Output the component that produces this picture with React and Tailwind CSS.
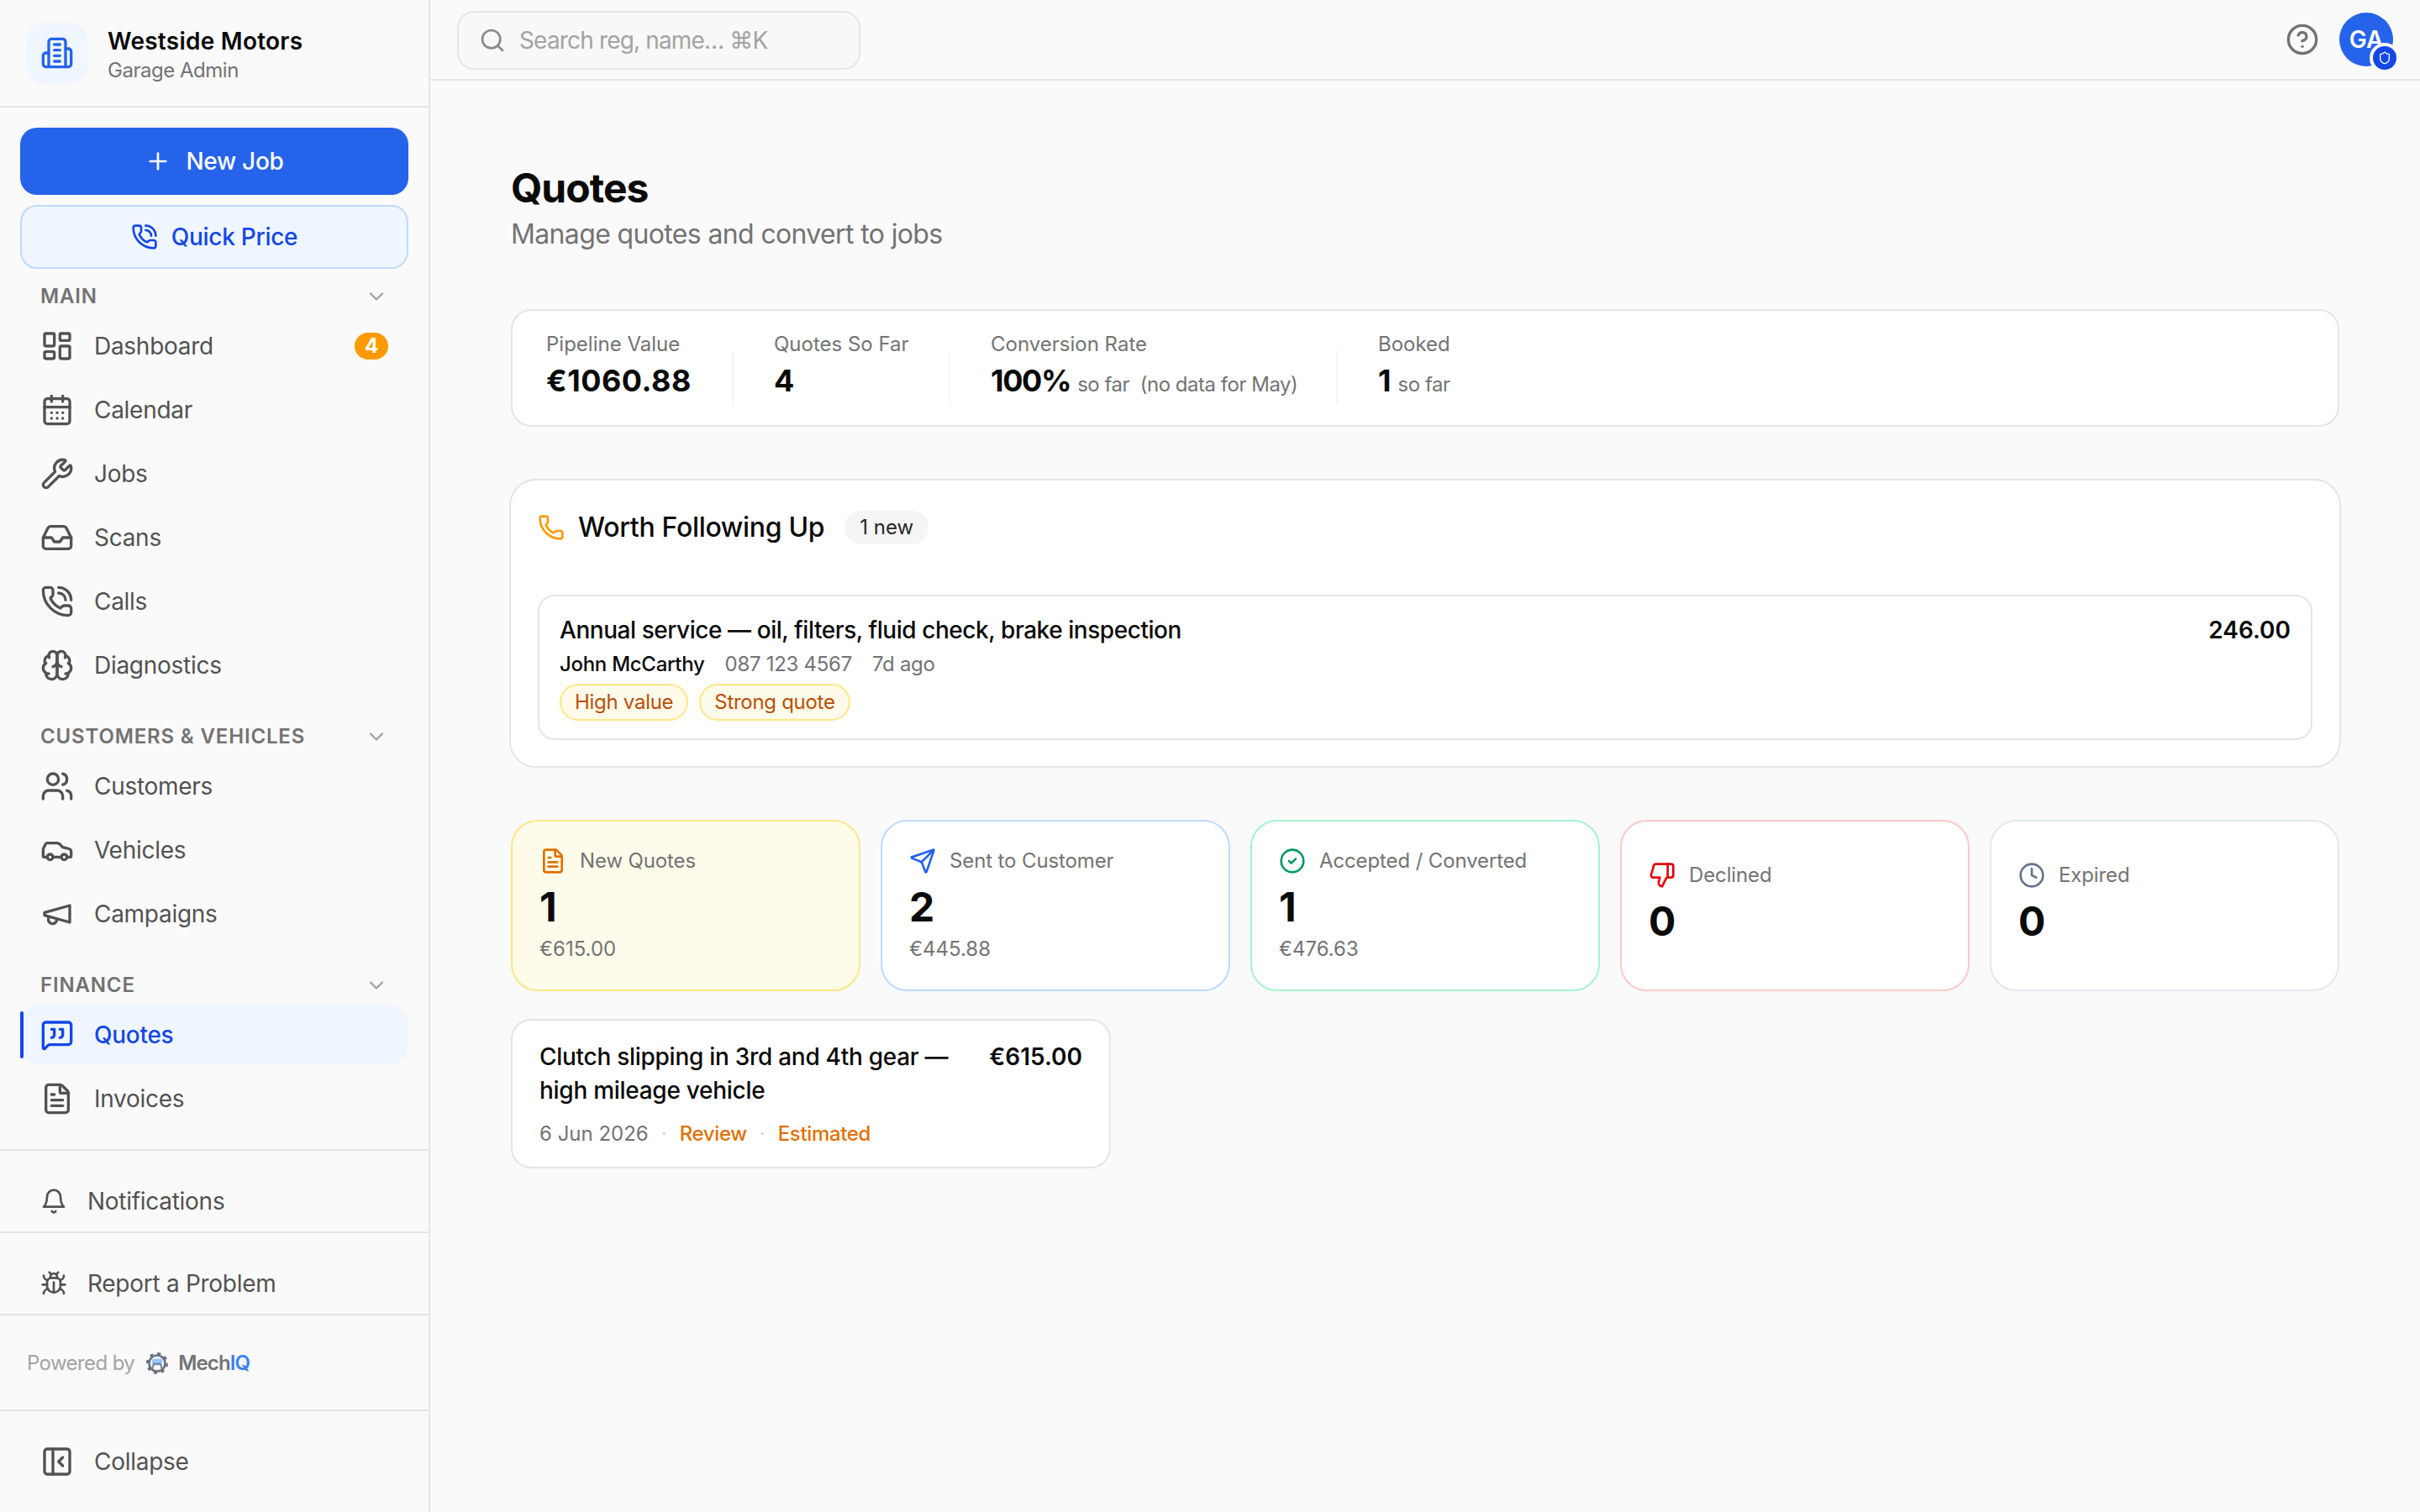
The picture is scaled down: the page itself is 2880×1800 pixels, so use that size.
import React from "react";
import {
  Plus, PhoneCall, ChevronDown, LayoutDashboard, CalendarDays, Wrench, Inbox,
  Users, Car, MessageSquareQuote, FileText, Bug, PanelLeftClose, Search, CircleHelp,
  Shield, Phone, Send, CircleCheck, Clock,
} from "lucide-react";

function Ico({ size = 40, className = "", children }) {
  return (
    <svg width={size} height={size} viewBox="0 0 24 24" fill="none" stroke="currentColor" strokeWidth="2" strokeLinecap="round" strokeLinejoin="round" className={className}>
      {children}
    </svg>
  );
}

const Building = (p) => (
  <Ico {...p}>
    <path d="M6 22V4a2 2 0 0 1 2-2h8a2 2 0 0 1 2 2v18Z" />
    <path d="M6 12H4a2 2 0 0 0-2 2v6a2 2 0 0 0 2 2h2" />
    <path d="M18 9h2a2 2 0 0 1 2 2v9a2 2 0 0 1-2 2h-2" />
    <path d="M10 6h4" /><path d="M10 10h4" /><path d="M10 14h4" /><path d="M10 18h4" />
  </Ico>
);
const BrainIcon = (p) => (
  <Ico {...p}>
    <path d="M12 5a3 3 0 1 0-5.997.125 4 4 0 0 0-2.526 5.77 4 4 0 0 0 .556 6.588A4 4 0 1 0 12 18Z" />
    <path d="M12 5a3 3 0 1 1 5.997.125 4 4 0 0 1 2.526 5.77 4 4 0 0 1-.556 6.588A4 4 0 1 1 12 18Z" />
    <path d="M15 13a4.5 4.5 0 0 1-3-4 4.5 4.5 0 0 1-3 4" />
    <path d="M17.599 6.5a3 3 0 0 0 .399-1.375" />
    <path d="M6.003 5.125A3 3 0 0 0 6.401 6.5" />
    <path d="M3.477 10.896a4 4 0 0 1 .585-.396" />
    <path d="M19.938 10.5a4 4 0 0 1 .585.396" />
    <path d="M6 18a4 4 0 0 1-1.967-.516" />
    <path d="M19.967 17.484A4 4 0 0 1 18 18" />
  </Ico>
);
const Horn = (p) => (
  <Ico {...p}>
    <path d="m3 11 18-5v12L3 13v-2z" />
    <path d="M11.6 16.8a3 3 0 1 1-5.8-1.6" />
  </Ico>
);
const BellIcon = (p) => (
  <Ico {...p}>
    <path d="M6 8a6 6 0 0 1 12 0c0 7 3 9 3 9H3s3-2 3-9" />
    <path d="M10.3 21a1.94 1.94 0 0 0 3.4 0" />
  </Ico>
);
const ThumbDown = (p) => (
  <Ico {...p}>
    <path d="M17 14V2" />
    <path d="M9 18.12 10 14H4.17a2 2 0 0 1-1.92-2.56l2.33-8A2 2 0 0 1 6.5 2H20a2 2 0 0 1 2 2v8a2 2 0 0 1-2 2h-2.76a2 2 0 0 0-1.79 1.11L12 22a3.13 3.13 0 0 1-3-3.88Z" />
  </Ico>
);

function SectionHead({ label, first }) {
  return (
    <div className={`mb-[7px] flex h-[32px] items-center justify-between px-6 ${first ? "mt-[17px]" : "mt-[33px]"}`}>
      <span className="text-[24px] font-semibold leading-[32px] tracking-[0.035em] text-[#737373]">{label}</span>
      <ChevronDown size={28} strokeWidth={2} className="text-[#a3a3a3]" />
    </div>
  );
}

function NavItem({ icon: Icon, label, active, badge }) {
  return (
    <div className={`relative flex h-[72px] items-center gap-6 rounded-[24px] px-6 ${active ? "bg-blue-50 font-medium text-blue-700" : "text-[#525252]"}`}>
      {active && <span className="absolute left-0 top-[8px] h-[56px] w-[4px] rounded-full bg-blue-700" />}
      <Icon size={40} strokeWidth={2} className="shrink-0" />
      <span className="text-[28px] leading-[40px] tracking-[-0.01em]">{label}</span>
      {badge && (
        <span className="ml-auto flex h-[32px] w-[40px] items-center justify-center rounded-full bg-amber-500 text-[24px] font-bold text-white">
          {badge}
        </span>
      )}
    </div>
  );
}

function FooterRow({ icon: Icon, label }) {
  return (
    <div className="flex h-[98px] items-center gap-6 border-t-2 border-[#e5e5e5] px-12 pt-[23px] text-[#525252]">
      <Icon size={32} className="shrink-0" />
      <span className="text-[28px] leading-[40px] tracking-[-0.01em]">{label}</span>
    </div>
  );
}

function MechLogo() {
  return (
    <svg width="26" height="26" viewBox="0 0 26 26" fill="none" className="ml-[14px] mr-[12px] shrink-0">
      <circle cx="13" cy="13" r="9.5" stroke="#6b7280" strokeWidth="2.6" />
      <circle cx="13" cy="13" r="11.5" stroke="#6b7280" strokeWidth="3" strokeDasharray="4 5" />
      <rect x="7" y="7.5" width="12" height="8" rx="2" fill="#93c5fd" />
      <path d="M8 19v-3l1.5-2.5h7L18 16v3" stroke="#6b7280" strokeWidth="1.6" />
    </svg>
  );
}

function Sidebar() {
  return (
    <aside className="flex h-[1800px] w-[512px] shrink-0 flex-col border-r-2 border-[#e5e5e5] bg-[#fafafa]">
      <div className="flex h-[128px] shrink-0 items-center gap-[24px] border-b-2 border-[#e5e5e5] pl-[32px]">
        <div className="flex h-[72px] w-[72px] items-center justify-center rounded-[20px] bg-blue-50">
          <Building size={40} className="text-[#2563eb]" />
        </div>
        <div className="mt-[5px] flex flex-col">
          <span className="text-[28px] font-semibold leading-[36px] tracking-[0.009em] text-[#0a0a0a]">Westside Motors</span>
          <span className="mt-[1px] text-[24px] leading-[32px] tracking-[-0.02em] text-[#737373]">Garage Admin</span>
        </div>
      </div>
      <div className="flex flex-1 flex-col px-[24px] pt-[24px]">
        <button className="flex h-[80px] items-center justify-center gap-[17px] rounded-[20px] bg-[#2563eb] text-[28px] font-medium tracking-[-0.01em] text-white">
          <Plus size={32} strokeWidth={2} />
          New Job
        </button>
        <button className="mt-[12px] flex h-[76px] items-center justify-center gap-[16px] rounded-[20px] border-2 border-blue-200 bg-blue-50 text-[28px] font-medium tracking-[-0.01em] text-blue-700">
          <PhoneCall size={32} strokeWidth={2} />
          Quick Price
        </button>
        <SectionHead label="MAIN" first />
        <div className="flex flex-col gap-[4px]">
          <NavItem icon={LayoutDashboard} label="Dashboard" badge="4" />
          <NavItem icon={CalendarDays} label="Calendar" />
          <NavItem icon={Wrench} label="Jobs" />
          <NavItem icon={Inbox} label="Scans" />
          <NavItem icon={PhoneCall} label="Calls" />
          <NavItem icon={BrainIcon} label="Diagnostics" />
        </div>
        <SectionHead label="CUSTOMERS & VEHICLES" />
        <div className="flex flex-col gap-[4px]">
          <NavItem icon={Users} label="Customers" />
          <NavItem icon={Car} label="Vehicles" />
          <NavItem icon={Horn} label="Campaigns" />
        </div>
        <SectionHead label="FINANCE" />
        <div className="flex flex-col gap-[4px]">
          <NavItem icon={MessageSquareQuote} label="Quotes" active />
          <NavItem icon={FileText} label="Invoices" />
        </div>
      </div>
      <FooterRow icon={BellIcon} label="Notifications" />
      <FooterRow icon={Bug} label="Report a Problem" />
      <div className="flex h-[114px] items-center border-t-2 border-[#e5e5e5] pl-[32px] pt-[2px] text-[24px]">
        <span className="tracking-[-0.025em] text-[#a3a3a3]">Powered by</span>
        <MechLogo />
        <span className="font-semibold tracking-[-0.035em] text-[#737373]">
          Mech<span className="text-[#3b82f6]">IQ</span>
        </span>
      </div>
      <div className="flex h-[122px] items-center gap-6 border-t-2 border-[#e5e5e5] px-12 text-[#525252]">
        <PanelLeftClose size={40} strokeWidth={2} className="shrink-0" />
        <span className="text-[28px] leading-[40px] tracking-[-0.01em]">Collapse</span>
      </div>
    </aside>
  );
}

function TopBar() {
  return (
    <header className="flex h-[96px] shrink-0 items-center justify-between border-b-2 border-[#e5e5e5] px-[32px]">
      <div className="mt-[2px] flex h-[70px] w-[480px] items-center gap-[16px] rounded-[20px] border-2 border-[#e5e5e5] bg-[#f8f8f8] pl-[24px]">
        <Search size={32} strokeWidth={2} className="text-[#8a8a8a]" />
        <span className="text-[28px] tracking-[-0.03em] text-[#a3a3a3]">Search reg, name… ⌘K</span>
      </div>
      <div className="flex items-center gap-[24px]">
        <CircleHelp size={40} strokeWidth={2} className="text-[#737373]" />
        <div className="relative flex h-[64px] w-[64px] items-center justify-center rounded-full bg-[#2563eb] text-[28px] font-semibold text-white">
          GA
          <span className="absolute -bottom-[8px] -right-[8px] flex h-[36px] w-[36px] items-center justify-center rounded-full border-[4px] border-[#fafafa] bg-blue-700">
            <Shield size={16} strokeWidth={2} className="text-white" />
          </span>
        </div>
      </div>
    </header>
  );
}

function Stat({ label, value, note, width, valueClass }) {
  return (
    <div className={`whitespace-nowrap ${width}`}>
      <div className="text-[24px] leading-[32px] text-[#737373]">{label}</div>
      <div className="mt-[3px] flex items-baseline gap-[8px] leading-[48px]">
        <span className={`text-[36px] font-bold text-[#0a0a0a] ${valueClass}`}>{value}</span>
        {note && <span className="whitespace-pre text-[24px] tracking-[-0.02em] text-[#737373]">{note}</span>}
      </div>
    </div>
  );
}

const Divider = () => <div className="mx-[48px] h-[64px] w-[2px] shrink-0 self-center bg-[#f5f5f5]" />;

function StatusCard({ icon: Icon, iconClass, cardClass, label, count, amount }) {
  return (
    <div className={`flex h-[204px] flex-col justify-center rounded-[32px] border-2 px-[32px] pb-[2px] ${cardClass}`}>
      <div className="flex items-center gap-[16px]">
        <Icon size={32} strokeWidth={2} className={`shrink-0 ${iconClass}`} />
        <span className="text-[24px] leading-[32px] tracking-[-0.005em] text-[#737373]">{label}</span>
      </div>
      <div className="mt-[7px] text-[48px] font-bold leading-[64px] text-[#0a0a0a]">{count}</div>
      {amount && <div className="mt-[2px] text-[24px] leading-[32px] text-[#737373]">{amount}</div>}
    </div>
  );
}

function Tag({ children }) {
  return (
    <span className="flex h-[44px] items-center rounded-full border-2 border-amber-200 bg-amber-50 px-[16px] text-[24px] tracking-[-0.012em] text-amber-700">{children}</span>
  );
}

function Main() {
  return (
    <main className="flex h-[1800px] min-w-0 flex-1 flex-col bg-[#fafafa]">
      <TopBar />
      <div className="flex flex-col px-[96px] pt-[100px]">
        <h1 className="text-[48px] font-bold leading-[56px] tracking-[-0.02em] text-[#0a0a0a]">Quotes</h1>
        <p className="mt-[3px] mb-[1px] text-[32px] leading-[48px] tracking-[-0.02em] text-[#737373]">Manage quotes and convert to jobs</p>

        <section className="mt-[64px] flex h-[140px] items-start rounded-[24px] border-2 border-[#e5e5e5] bg-white px-[40px] pt-[24px]">
          <Stat label="Pipeline Value" value="€1060.88" width="w-[173px]" valueClass="tracking-[0.014em]" />
          <Divider />
          <Stat label="Quotes So Far" value="4" width="w-[160px]" />
          <Divider />
          <Stat label="Conversion Rate" value="100%" note="so far  (no data for May)" width="w-[363px]" valueClass="tracking-[-0.038em]" />
          <Divider />
          <Stat label="Booked" value="1" note="so far" />
        </section>

        <section className="-mx-[2px] mt-[62px] h-[344px] rounded-[32px] border-2 border-[#e5e5e5] bg-white px-[32px] pt-[32px]">
          <div className="flex h-[48px] items-center">
            <Phone size={32} strokeWidth={2} className="text-amber-500" />
            <span className="ml-[16px] text-[32px] font-medium leading-[48px] tracking-[-0.01em] text-[#0a0a0a]">Worth Following Up</span>
            <span className="ml-[24px] flex h-[40px] items-center rounded-full bg-[#f5f5f5] px-[18px] text-[24px] text-[#262626]">1 new</span>
          </div>
          <div className="mt-[56px] h-[173px] rounded-[20px] border-2 border-[#e5e5e5] bg-white px-[24px] pt-[22px]">
            <div className="flex items-center justify-between">
              <span className="text-[28px] font-[450] leading-[36px] tracking-[-0.016em] text-[#0a0a0a]">Annual service — oil, filters, fluid check, brake inspection</span>
              <span className="text-[28px] font-semibold leading-[36px] text-[#0a0a0a]">246.00</span>
            </div>
            <div className="mt-[5px] flex h-[36px] items-center gap-[24px] text-[24px] tracking-[-0.012em]">
              <span className="font-medium text-[#0a0a0a]">John McCarthy</span>
              <span className="text-[#737373]">087 123 4567</span>
              <span className="text-[#737373]">7d ago</span>
            </div>
            <div className="mt-[5px] flex gap-[13px]">
              <Tag>High value</Tag>
              <Tag>Strong quote</Tag>
            </div>
          </div>
        </section>

        <section className="mt-[62px] grid grid-cols-5 gap-[24px]">
          <StatusCard icon={FileText} iconClass="text-amber-600" cardClass="border-amber-200 bg-amber-50" label="New Quotes" count="1" amount="€615.00" />
          <StatusCard icon={Send} iconClass="text-[#2563eb]" cardClass="border-blue-200 bg-white" label="Sent to Customer" count="2" amount="€445.88" />
          <StatusCard icon={CircleCheck} iconClass="text-emerald-600" cardClass="border-emerald-200 bg-white" label="Accepted / Converted" count="1" amount="€476.63" />
          <StatusCard icon={ThumbDown} iconClass="text-red-600" cardClass="border-red-200 bg-white" label="Declined" count="0" />
          <StatusCard icon={Clock} iconClass="text-slate-500" cardClass="border-slate-200 bg-white" label="Expired" count="0" />
        </section>

        <section className="mt-[33px] h-[178px] w-[714px] rounded-[24px] border-2 border-[#e5e5e5] bg-white px-[32px] pt-[23px]">
          <div className="flex items-start justify-between gap-[32px]">
            <span className="text-[28px] font-[450] leading-[40px] tracking-[-0.01em] text-[#0a0a0a]">Clutch slipping in 3rd and 4th gear — high mileage vehicle</span>
            <span className="shrink-0 text-[28px] font-semibold leading-[40px] text-[#0a0a0a]">€615.00</span>
          </div>
          <div className="mt-[16px] flex items-center gap-[15px] text-[24px] leading-[32px]">
            <span className="text-[#737373]">6 Jun 2026</span>
            <span className="text-[#d4d4d4]">·</span>
            <span className="font-medium tracking-[-0.015em] text-amber-600">Review</span>
            <span className="text-[#d4d4d4]">·</span>
            <span className="font-medium tracking-[-0.015em] text-amber-600">Estimated</span>
          </div>
        </section>
      </div>
    </main>
  );
}

export default function App() {
  return (
    <div className="flex h-[1800px] w-[2880px] overflow-hidden bg-[#fafafa] font-['Inter',sans-serif]">
      <Sidebar />
      <Main />
    </div>
  );
}
